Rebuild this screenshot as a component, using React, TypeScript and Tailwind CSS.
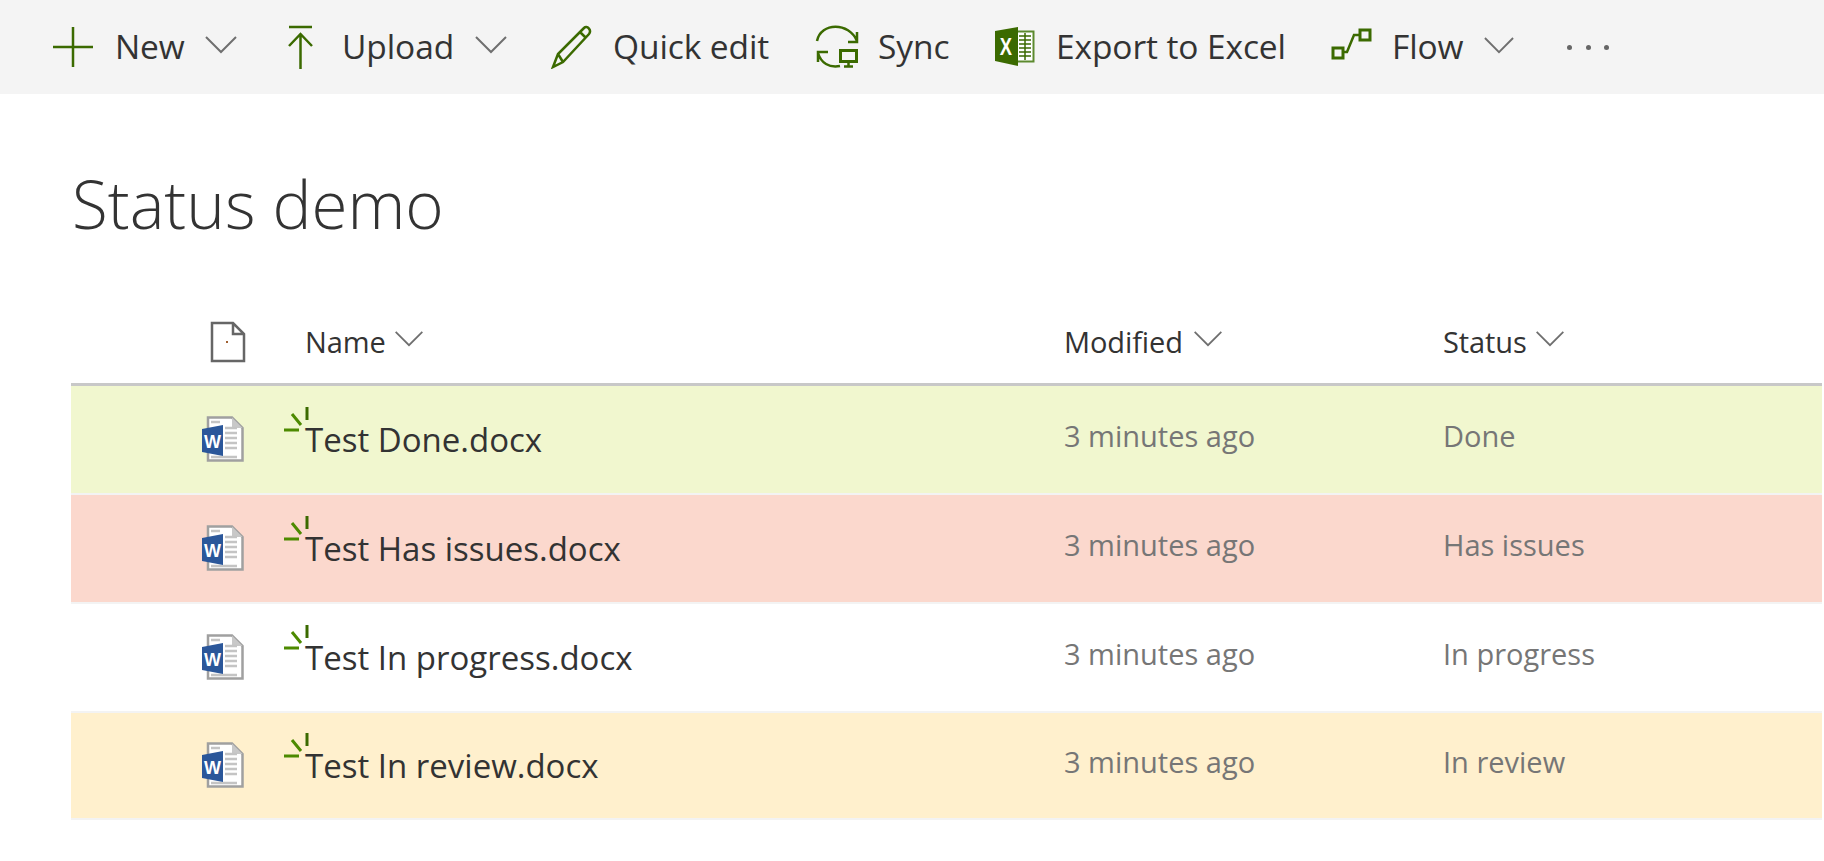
const GREEN = "#3b6a00";

function Chevron({ className }: { className: string }) {
    return (
        <svg className={className} viewBox="0 0 32 18" fill="none" stroke="#6f6f6f" strokeWidth="2">
            <path d="M1 1 L16 16 L31 1" />
        </svg>
    );
}

function WordIcon() {
    return (
        <svg width="42" height="46" viewBox="0 0 42 46" className="shrink-0">
            <path d="M6 1.5 H30 L40.5 12 V44.5 H6 Z" fill="#fff" stroke="#a0a0a0" strokeWidth="2.5" />
            <path d="M30 1.5 V12 H40.5 Z" fill="#c8c8c8" />
            <path d="M9 6 H18 M23 12 H35 M23 17 H35 M23 22 H35 M23 27 H35 M23 32 H35 M9 41 H35" stroke="#c4c4c4" strokeWidth="2.5" />
            <path d="M0 13 L21 9 V40 L0 36 Z" fill="#2b579a" />
            <text x="10.5" y="32" textAnchor="middle" fontSize="18" fontWeight="700" fill="#fff" fontFamily="Liberation Sans, sans-serif">W</text>
        </svg>
    );
}

function Glimmer() {
    return (
        <svg className="absolute left-[-21px] top-[-11px]" width="26" height="28" viewBox="0 0 26 28" fill="none" strokeWidth="3">
            <path d="M0 24 H15 M8 8 L17 19" stroke="#4d8a00" />
            <path d="M23 1 V14" stroke="#3b6a00" />
        </svg>
    );
}

function ToolButton({ icon, label, chevron, className }: { icon: React.ReactNode; label: string; chevron?: string; className: string }) {
    return (
        <div className={`flex items-center ${className}`}>
            {icon}
            <span className="text-[33.5px] leading-none text-[#333] font-['Open_Sans',sans-serif] tracking-[-0.1px]">{label}</span>
            {chevron && <Chevron className={chevron} />}
        </div>
    );
}

const rows = [
    { name: "Test Done.docx", status: "Done", bg: "bg-[#f1f7cf]" },
    { name: "Test Has issues.docx", status: "Has issues", bg: "bg-[#fbd8cd]" },
    { name: "Test In progress.docx", status: "In progress", bg: "bg-white" },
    { name: "Test In review.docx", status: "In review", bg: "bg-[#fff0cd]" },
];

export default function App() {
    return (
        <div className="h-[861px] overflow-hidden bg-white font-['Open_Sans',sans-serif] text-[#333]">
            <div className="flex h-[94px] items-center bg-[#f4f4f4] pl-[53px]">
                <ToolButton
                    className="w-[232px]"
                    label="New"
                    chevron="ml-[20px] mt-[-4px] w-[32px] h-[18px]"
                    icon={
                        <svg className="mr-[22px]" width="40" height="40" viewBox="0 0 40 40" stroke={GREEN} strokeWidth="2.5">
                            <path d="M0 20 H40 M20 0 V40" />
                        </svg>
                    }
                />
                <ToolButton
                    className="w-[266px]"
                    label="Upload"
                    chevron="ml-[21px] mt-[-4px] w-[32px] h-[18px]"
                    icon={
                        <svg className="mr-[26px]" width="31" height="44" viewBox="0 0 31 44" fill="none" stroke={GREEN} strokeWidth="2.5">
                            <path d="M4 2 H27 M15.5 9 V44 M4 21 L15.5 9 L27 21" />
                        </svg>
                    }
                />
                <ToolButton
                    className="w-[264px]"
                    label="Quick edit"
                    icon={
                        <svg className="mr-[20px]" width="42" height="44" viewBox="0 0 42 44" fill="none" stroke={GREEN} strokeWidth="2.5">
                            <path d="M2 42 L7 29 L33 3 C36 0 41 5 38 9 L12 37 Z M7 29 L12 37 M29 7 L35 13" />
                        </svg>
                    }
                />
                <ToolButton
                    className="w-[179px]"
                    label="Sync"
                    icon={
                        <svg className="mr-[19px]" width="44" height="44" viewBox="0 0 44 44" fill="none" stroke={GREEN} strokeWidth="2.5">
                            <path d="M2 16 C6 -3 34 -3 42 16 M42 7 V17 H33 M13 27 H3 V37 M3 28 C6 38 14 43 25 41" />
                            <rect x="25.5" y="25.5" width="16" height="11" strokeWidth="3" />
                            <path d="M33.5 36 V41 M29 41.5 H38" />
                        </svg>
                    }
                />
                <ToolButton
                    className="w-[336px]"
                    label="Export to Excel"
                    icon={
                        <svg width="41" height="40" viewBox="0 0 41 40" className="mr-[21px] shrink-0">
                            <rect x="22" y="4.5" width="17.5" height="30" fill="#fff" stroke="#5c8a2e" strokeWidth="2" />
                            <path d="M25 9 H37 M25 13 H37 M25 17 H37 M25 21 H37 M25 25 H37 M25 29 H37 M31 6 V33" stroke="#3b6a00" strokeWidth="1.5" />
                            <path d="M1 4 L24 0 V39 L1 34 Z" fill="#3b6a00" />
                            <text x="0" y="0" transform="translate(12 28) scale(0.8 1)" textAnchor="middle" fontSize="23" fontWeight="700" fill="#fff" fontFamily="Liberation Sans, sans-serif">X</text>
                        </svg>
                    }
                />
                <ToolButton
                    className="w-[237px]"
                    label="Flow"
                    chevron="ml-[21px] mt-[-4px] w-[30px] h-[17px]"
                    icon={
                        <svg className="mr-[20px]" width="42" height="40" viewBox="0 0 42 40" fill="none" stroke={GREEN} strokeWidth="3">
                            <rect x="3" y="21" width="10" height="10" />
                            <rect x="30" y="3" width="10" height="10" />
                            <path d="M13 25 H17 L24 8 H30" strokeWidth="2.5" />
                        </svg>
                    }
                />
                <div className="flex w-[42px] justify-between">
                    <span className="size-[5px] rounded-full bg-[#666]" />
                    <span className="size-[5px] rounded-full bg-[#666]" />
                    <span className="size-[5px] rounded-full bg-[#666]" />
                </div>
            </div>

            <h1 className="pl-[72px] pt-[65px] text-[65.5px] leading-[90px] font-light text-[#333]">Status demo</h1>

            <div className="ml-[71px] mr-[2px] mt-[53px]">
                <div className="flex h-[84px] items-center border-b-[3px] border-[#c8c8c8] pb-[2px]">
                    <div className="w-[234px] shrink-0 pl-[139px]">
                        <svg width="36" height="42" viewBox="0 0 36 42" fill="none" stroke="#666" strokeWidth="2.5">
                            <path d="M2 2 H23 L34 13 V40 H2 Z M23 2 V13 H34" />
                            <path d="M17 20 V22" stroke="#a06030" strokeWidth="2" />
                        </svg>
                    </div>
                    <div className="flex w-[759px] shrink-0 items-center">
                        <span className="text-[29px] tracking-[-0.1px]">Name</span>
                        <Chevron className="ml-[8px] mt-[-6px] h-[16px] w-[30px]" />
                    </div>
                    <div className="flex w-[379px] shrink-0 items-center">
                        <span className="text-[29px] tracking-[-0.1px]">Modified</span>
                        <Chevron className="ml-[10px] mt-[-6px] h-[16px] w-[30px]" />
                    </div>
                    <div className="flex items-center">
                        <span className="text-[29px] tracking-[-0.1px]">Status</span>
                        <Chevron className="ml-[8px] mt-[-6px] h-[16px] w-[30px]" />
                    </div>
                </div>
                {rows.map((row) => (
                    <div key={row.name} className={`flex h-[109px] items-center border-b-[2px] border-[#f3f3f3] last:h-[107px] ${row.bg}`}>
                        <div className="mt-[-2px] w-[234px] shrink-0 pl-[131px]">
                            <WordIcon />
                        </div>
                        <div className="w-[759px] shrink-0">
                            <span className="relative text-[33px]">
                                <Glimmer />
                                {row.name}
                            </span>
                        </div>
                        <div className="mt-[-8px] w-[379px] shrink-0 text-[29px] text-[#767676]">3 minutes ago</div>
                        <div className="mt-[-8px] text-[29px] text-[#767676]">{row.status}</div>
                    </div>
                ))}
            </div>
        </div>
    );
}
